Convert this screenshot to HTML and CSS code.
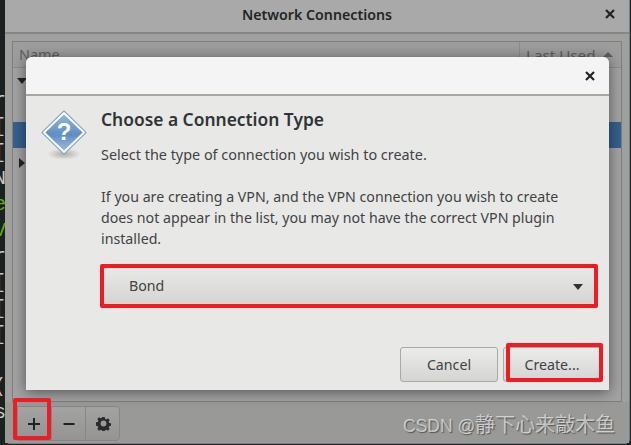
FILE: index.html
```html
<!DOCTYPE html>
<html lang="en">
<head>
    <meta charset="UTF-8">
    <title>Network Connections</title>
    <link rel="stylesheet" href="styles.css">
</head>
<body>
    <div class="terminal">
        <div>r</div><div>[</div><div>[</div><div>N</div>
        <div class="green">e</div><div class="green">V</div>
        <div>r</div><div>[</div><div>[</div><div>[</div>
        <div>&nbsp;</div><div>(</div><div>s</div>
    </div>

    <div class="window">
        <div class="titlebar">
            <span class="title">Network Connections</span>
            <svg class="close" width="10" height="10" viewBox="0 0 10 10"><path d="M1 1l8 8M9 1l-8 8" /></svg>
        </div>
        <div class="list">
            <div class="list-head">
                <div class="col-name">Name</div>
                <div class="col-used">Last Used <i class="tri-up"></i></div>
            </div>
            <div class="row"><i class="tri-down"></i></div>
            <div class="row"></div>
            <div class="row selected"></div>
            <div class="row"><i class="tri-right"></i></div>
        </div>
        <div class="toolbar">
            <button class="tool">
                <svg width="14" height="14" viewBox="0 0 14 14"><path d="M7 1v12M1 7h12" /></svg>
            </button>
            <button class="tool">
                <svg width="14" height="14" viewBox="0 0 14 14"><path d="M1.500 7h11" /></svg>
            </button>
            <button class="tool">
                <svg class="gear-icon" width="15" height="15" viewBox="0 0 16 16"><path class="gear" fill-rule="evenodd" d="M6.700 1h2.600l.4 2 1.300.6 1.800-1.100 1.800 1.800-1.100 1.800.6 1.300 2 .4v2.600l-2 .4-.6 1.300 1.100 1.800-1.800 1.800-1.800-1.100-1.300.6-.4 2H6.700l-.4-2-1.300-.6-1.800 1.100-1.800-1.800 1.100-1.800-.6-1.300-2-.4V6.700l2-.4.6-1.300-1.100-1.800 1.800-1.800 1.800 1.100 1.300-.6zM8 4.900a3.100 3.100 0 1 0 0 6.200 3.100 3.100 0 0 0 0-6.200z" /></svg>
            </button>
        </div>
    </div>
    <div class="edge"></div>

    <div class="dialog">
        <div class="dialog-head">
            <svg class="close" width="10" height="10" viewBox="0 0 10 10"><path d="M1 1l8 8M9 1l-8 8" /></svg>
        </div>
        <div class="dialog-body">
            <div class="message">
                <svg class="question" width="48" height="52" viewBox="0 0 48 52">
                    <defs>
                        <linearGradient id="blue" x1="0" y1="0" x2="0" y2="1">
                            <stop offset="0" stop-color="#9dbde0" />
                            <stop offset="0.55" stop-color="#5f8ec4" />
                            <stop offset="1" stop-color="#a6c2e0" />
                        </linearGradient>
                        <radialGradient id="shade">
                            <stop offset="0" stop-color="#000" stop-opacity="0.25" />
                            <stop offset="1" stop-color="#000" stop-opacity="0" />
                        </radialGradient>
                    </defs>
                    <ellipse cx="24" cy="44" rx="17" ry="6" fill="url(#shade)" />
                    <path d="M24 1.500L45.500 22.500 24 43.500 2.500 22.500z" fill="url(#blue)" stroke="#7fa5d0" stroke-width="2" stroke-linejoin="round" />
                    <path d="M24 3L44 22.500 24 42 4 22.500z" fill="none" stroke="#fff" stroke-width="1.800" stroke-linejoin="round" />
                    <text x="24" y="30" text-anchor="middle" class="mark-q">?</text>
                </svg>
                <div class="copy">
                    <h1>Choose a Connection Type</h1>
                    <p class="lead">Select the type of connection you wish to create.</p>
                    <p>If you are creating a VPN, and the VPN connection you wish to create<br>does not appear in the list, you may not have the correct VPN plugin<br>installed.</p>
                </div>
            </div>
            <div class="combo">
                <span>Bond</span>
                <i class="tri-down small"></i>
            </div>
            <div class="actions">
                <button class="btn">Cancel</button>
                <button class="btn">Create...</button>
            </div>
        </div>
    </div>

    <!-- red annotation boxes -->
    <div class="mark mark-add"></div>
    <div class="mark mark-combo"></div>
    <div class="mark mark-create"></div>

    <div class="watermark">CSDN @<span class="cjk">静下心来敲木鱼</span></div>
</body>
</html>
```

FILE: styles.css
```css
/* General Styling */
* {
    box-sizing: border-box;
}

body {
    margin: 0;
    width: 631px;
    height: 445px;
    position: relative;
    overflow: hidden;
    display: flex;
    background: #1d2223;
    font-family: "Noto Sans", "Open Sans", sans-serif;
}

/* Terminal behind the window */
.terminal {
    width: 5px;
    flex: none;
    overflow: hidden;
    padding-top: 88px;
    background: #1b2021;
    color: #c8c8c8;
    font: 20px/26px "Liberation Mono", monospace;
}

.terminal div {
    margin-left: -7px;
    width: 14px;
    text-align: center;
}

.terminal .green {
    color: #5fae12;
}

/* Parent window, dimmed */
.window {
    width: 625px;
    flex: none;
    margin-bottom: 1px;
    display: flex;
    flex-direction: column;
    background: #a0a09f;
    border-radius: 0 0 5px 5px;
    border-right: 1px solid #7d7d7d;
    border-bottom: 1px solid #7d7d7d;
}

.edge {
    flex: 1;
    background: #20262a;
}

.titlebar {
    height: 34px;
    flex: none;
    display: flex;
    align-items: center;
    justify-content: center;
    padding-bottom: 4px;
    position: relative;
    background: #a9a9a9;
    border-bottom: 2px solid #858585;
}

.title {
    font-size: 14.2px;
    font-weight: 600;
    color: #232525;
}

.titlebar .close {
    position: absolute;
    right: 14px;
    top: 9px;
}

.close path {
    fill: none;
    stroke: #222;
    stroke-width: 2.2;
}

.list {
    margin: 7px 7px 0;
    height: 361px;
    flex: none;
    background: #a3a3a3;
    border: 1px solid #7f7f7f;
}

.list-head {
    height: 26px;
    display: flex;
    justify-content: space-between;
    font-size: 14.4px;
    color: #5e5f5f;
    background: #9d9d9d;
    border-bottom: 1px solid #8c8c8c;
}

.col-name {
    padding: 3px 0 0 6px;
}

.col-used {
    width: 102px;
    padding: 3px 8px 0 6px;
    border-left: 1px solid #8c8c8c;
    display: flex;
    justify-content: space-between;
    font-size: 15.2px;
    line-height: 21px;
}

.tri-up {
    align-self: flex-start;
    margin-top: 7px;
    border: 5px solid transparent;
    border-top: 0;
    border-bottom: 5px solid #5e5f5f;
}

.row {
    height: 27px;
    padding: 10px 0 0 4px;
}

.row.selected {
    height: 26px;
    background: #36608f;
}

.tri-down {
    display: block;
    width: 0;
    border: 5px solid transparent;
    border-bottom: 0;
    border-top: 6px solid #242424;
}

.tri-down.small {
    margin-top: 3px;
    border-top-color: #2e3436;
}

.tri-right {
    display: block;
    width: 0;
    margin-left: 2px;
    border: 5px solid transparent;
    border-right: 0;
    border-left: 6px solid #242424;
}

.toolbar {
    flex: 1;
    display: flex;
    padding: 4px 0 0 12px;
    background: #999998;
}

.tool {
    width: 35px;
    height: 35px;
    padding: 0;
    margin-right: -1px;
    display: flex;
    align-items: center;
    justify-content: center;
    background: linear-gradient(#a3a3a2, #949493);
    border: 1px solid #868686;
}

.tool:first-child svg {
    margin-left: -2px;
}

.tool:last-child {
    border-radius: 0 4px 4px 0;
}

.gear-icon {
    margin-left: 1px;
}

.tool path {
    fill: none;
    stroke: #1f2222;
    stroke-width: 2;
}

.tool path.gear {
    fill: #2a2c2c;
    stroke: none;
}

/* Dialog */
.dialog {
    position: absolute;
    left: 26px;
    top: 57px;
    width: 583px;
    height: 333px;
    display: flex;
    flex-direction: column;
    background: #e8e8e7;
    border-radius: 6px 6px 0 0;
    box-shadow: 0 2px 14px rgba(0, 0, 0, 0.5);
}

.dialog-head {
    height: 39px;
    flex: none;
    display: flex;
    align-items: center;
    justify-content: flex-end;
    padding-right: 14px;
    background: #f4f4f4;
    border-bottom: 2px solid #a8a8a3;
    border-radius: 6px 6px 0 0;
}

.dialog-body {
    flex: 1;
    display: flex;
    flex-direction: column;
    padding: 0 11px 8px 0;
}

.message {
    display: flex;
    padding-top: 11px;
}

.question {
    flex: none;
    margin: 3px 0 0 14px;
}

.mark-q {
    fill: #fff;
    font: bold 24px "Liberation Sans", sans-serif;
}

.copy {
    margin-left: 13px;
    color: #3f4344;
    font-size: 14.2px;
    line-height: 21px;
}

h1 {
    margin: 0 0 13px;
    font-size: 17.4px;
    line-height: 24px;
    font-weight: 600;
    color: #2e3436;
}

p {
    margin: 0 0 21px;
}

.lead {
    font-size: 14.4px;
}

.combo {
    margin: -7px 0 0 75px;
    height: 44px;
    display: flex;
    align-items: center;
    justify-content: space-between;
    padding: 0 15px 0 28px;
    font-size: 14.2px;
    color: #3f4344;
    background: linear-gradient(#ebebea, #d3d3d2);
}

.actions {
    margin: auto -3px 0 0;
    display: flex;
    justify-content: flex-end;
    gap: 5px;
}

.btn {
    width: 98px;
    height: 35px;
    padding: 0;
    font: 14.2px "Noto Sans", "Open Sans", sans-serif;
    color: #3f4344;
    background: linear-gradient(#ececeb, #d4d4d3);
    border: 1px solid #a9a9a5;
    border-radius: 3px;
}

/* Red annotation boxes */
.mark {
    position: absolute;
    border: 4px solid #ee1c25;
    border-radius: 2px;
}

.mark-add {
    left: 13px;
    top: 398px;
    width: 38px;
    height: 42px;
}

.mark-combo {
    left: 100px;
    top: 264px;
    width: 498px;
    height: 44px;
}

.mark-create {
    left: 506px;
    top: 343px;
    width: 97px;
    height: 39px;
}

.watermark {
    position: absolute;
    left: 403px;
    top: 413px;
    font-size: 17.5px;
    line-height: 24px;
    color: rgba(255, 255, 255, 0.6);
    text-shadow: 1px 1px 1px rgba(0, 0, 0, 0.45);
    font-family: "Liberation Sans", "Noto Sans CJK SC", sans-serif;
}

.cjk {
    font-size: 20px;
}
```
